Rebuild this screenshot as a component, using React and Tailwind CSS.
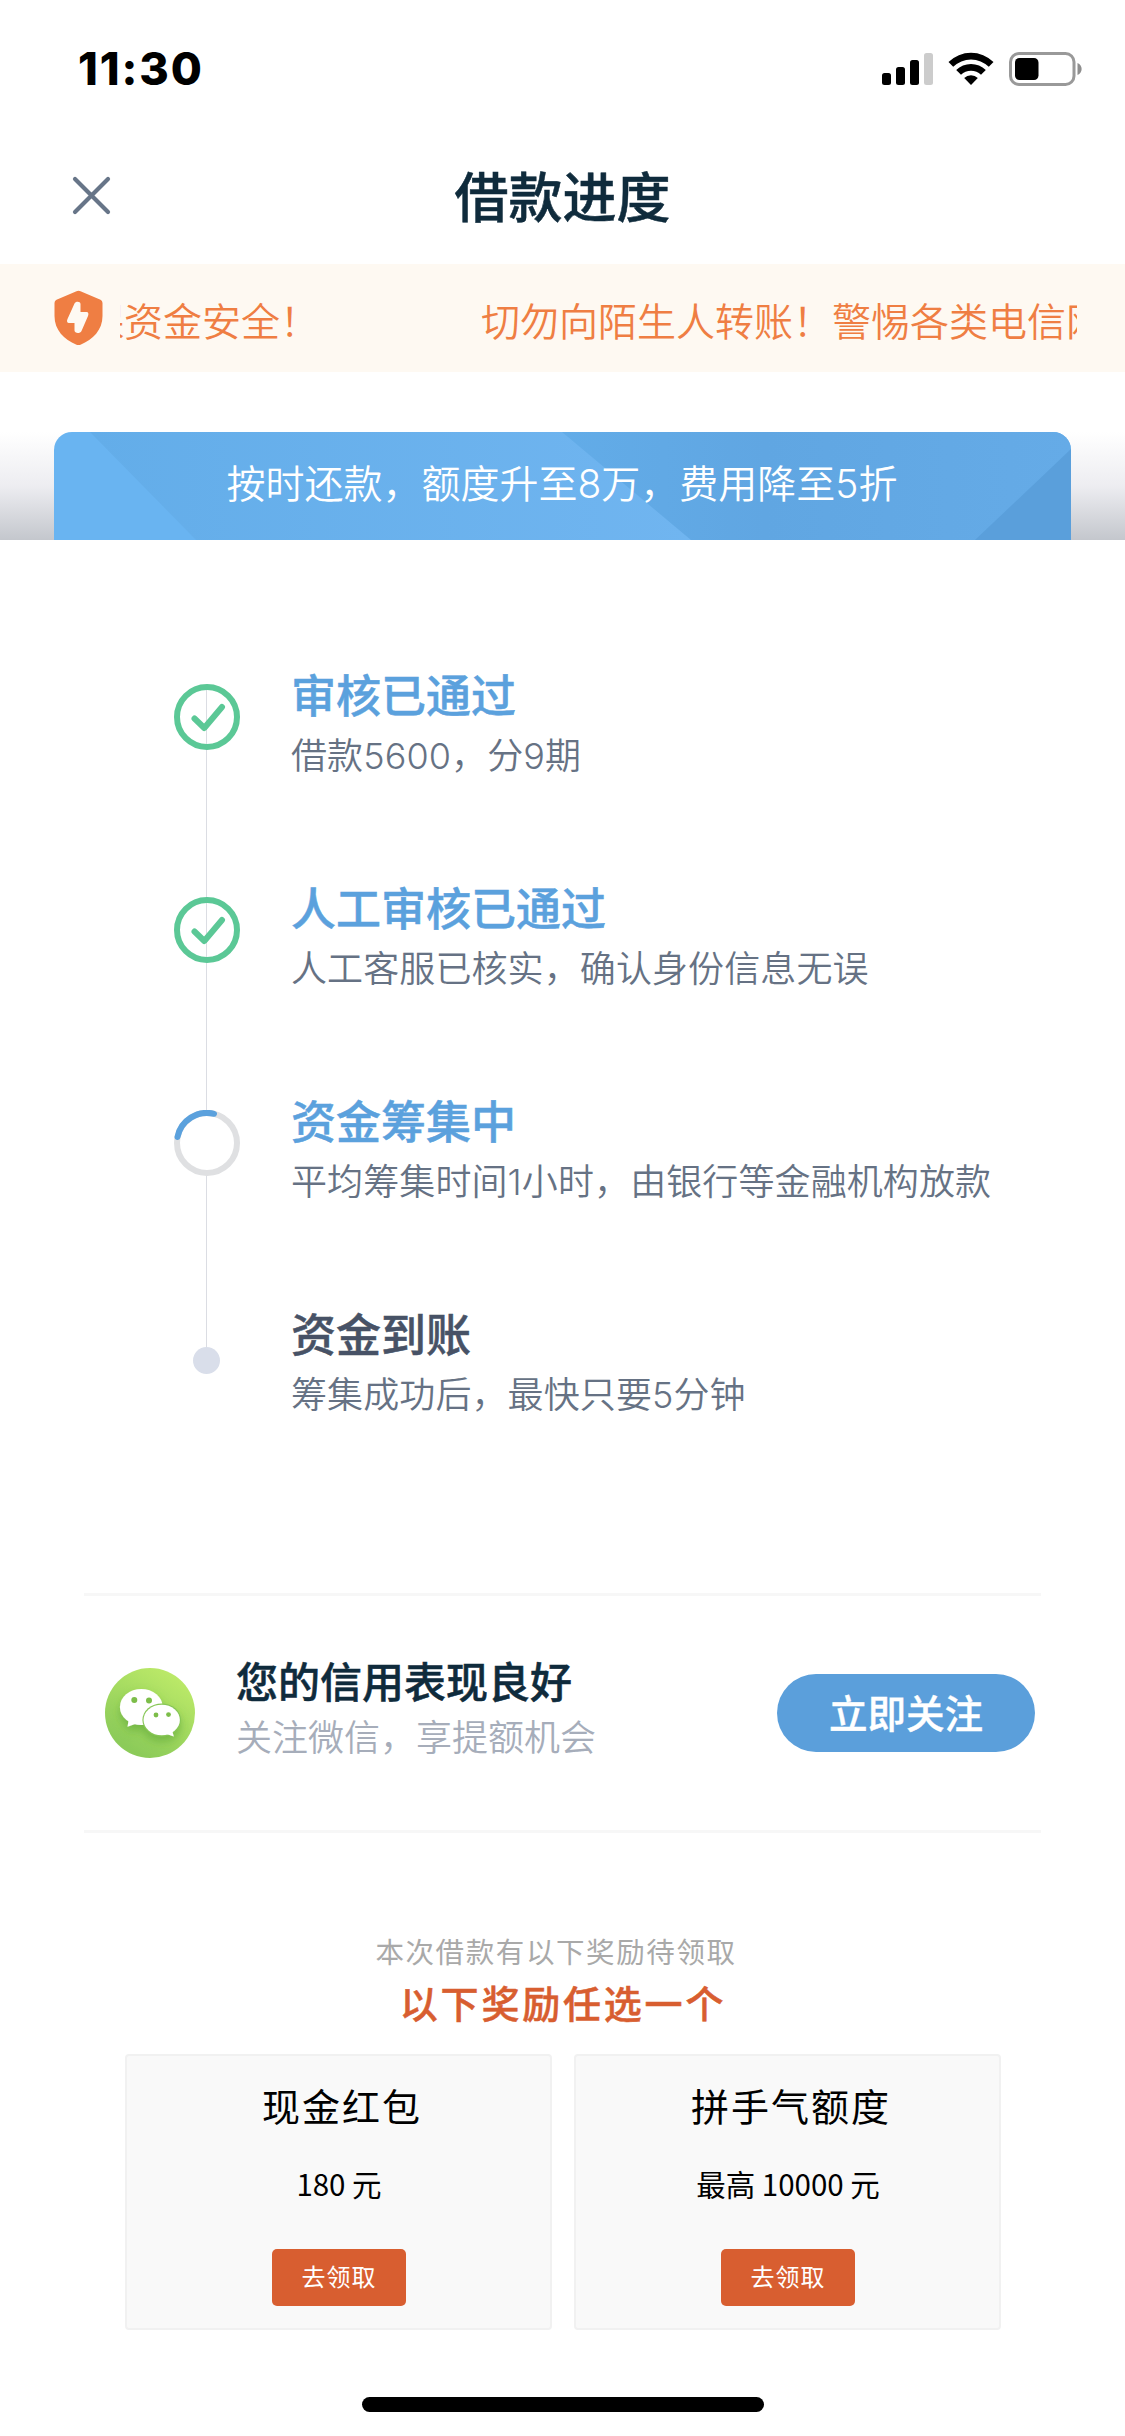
import React from 'react';

const steps = [
  { title: '审核已通过', desc: '借款5600，分9期', status: 'done' },
  { title: '人工审核已通过', desc: '人工客服已核实，确认身份信息无误', status: 'done' },
  { title: '资金筹集中', desc: '平均筹集时间1小时，由银行等金融机构放款', status: 'loading' },
  { title: '资金到账', desc: '筹集成功后，最快只要5分钟', status: 'pending' },
];

const rewards = [
  { title: '现金红包', amount: '180 元' },
  { title: '拼手气额度', amount: '最高 10000 元' },
];

const StatusBar = () => (
  <div className="flex h-[132px] items-start justify-between pl-[78px] pr-[42px]">
    <div className="mt-[46px] text-[45px] leading-[46px] font-extrabold tracking-[1.9px] text-black">11:30</div>
    <div className="mt-[52px] flex items-start">
      <svg width="52" height="34" viewBox="0 0 52 34">
        <rect x="0" y="21" width="9" height="12" rx="2.5" />
        <rect x="14" y="15" width="9" height="18" rx="2.5" />
        <rect x="28" y="8" width="9" height="25" rx="2.5" />
        <rect x="42" y="1" width="9" height="32" rx="2.5" fill="#cccccc" />
      </svg>
      <svg className="ml-[14px]" width="46" height="34" viewBox="0 0 46 34">
        <path d="M0.5 10A32 32 0 0 1 45.5 10L40.8 14.8A25.3 25.3 0 0 0 5.2 14.8Z" />
        <path d="M8.2 18A21 21 0 0 1 37.8 18L33 22.8A14.2 14.2 0 0 0 13 22.8Z" />
        <path d="M16.2 26A9.8 9.8 0 0 1 29.8 26L23 33Z" />
      </svg>
      <svg className="ml-[15px]" width="74" height="34" viewBox="0 0 74 34">
        <rect x="1.5" y="1.5" width="63.5" height="31" rx="8.5" fill="none" stroke="#999999" strokeWidth="3" />
        <rect x="6" y="6" width="23.5" height="22" rx="4.5" />
        <path d="M68.5 11C74 13 74 21 68.5 23Z" fill="#8e8e8e" />
      </svg>
    </div>
  </div>
);

const Header = () => (
  <header className="grid h-[132px] grid-cols-[183px_1fr_183px] items-center">
    <svg className="mb-[4px] ml-[72px]" width="40" height="40" viewBox="0 0 40 40">
      <path d="M3 3L36 36M36 3L3 36" stroke="#677588" strokeWidth="4.2" strokeLinecap="round" />
    </svg>
    <h1 className="pt-[2px] text-center text-[54px] leading-[64px] font-medium text-[#0f2b3c] [-webkit-text-stroke:0.5px]">借款进度</h1>
  </header>
);

const Notice = () => (
  <div className="flex h-[108px] items-center bg-[#fef9f2] px-[48px] text-[39px] font-[350] text-[#ef7e43]">
    <svg className="ml-[6px] shrink-0" width="49" height="56" viewBox="0 0 49 56">
      <path d="M22.5 1.2Q24.5 0.2 26.5 1.2L46.5 9.8Q48.5 10.8 48.5 13V26C48.5 40 39 49.5 26.5 54.7Q24.5 55.5 22.5 54.7C10 49.5 0.5 40 0.5 26V13Q0.5 10.8 2.5 9.8Z" fill="#ef7e43" />
      <path d="M20.5 13.5C21.5 11 26.5 11 26.5 14V22H32.5C34.5 22 34.8 24 34 26L27.5 41C26 44 20.5 43.5 20.5 40.5V33H15C13 33 12.5 31 13.5 29Z" fill="#fef9f2" />
    </svg>
    <div className="ml-[17px] flex h-[70px] w-[957px] justify-end overflow-hidden leading-[78px] whitespace-nowrap">
      <span className="mr-[162px] shrink-0">确保资金安全！</span>
      <span className="-mr-[28px] shrink-0">切勿向陌生人转账！警惕各类电信网</span>
    </div>
  </div>
);

const Banner = () => (
  <div className="mt-[60px] h-[108px] bg-linear-to-b from-white via-[#ededf1] to-[#c4c7cd] px-[54px]">
    <div className="relative flex h-full items-center justify-center overflow-hidden rounded-t-[18px]">
      <svg className="absolute inset-0" width="1017" height="108" viewBox="0 0 1017 108">
        <defs>
          <linearGradient id="mid" x1="0" x2="1">
            <stop offset="0" stopColor="#63ade9" />
            <stop offset="1" stopColor="#70b5f0" />
          </linearGradient>
          <linearGradient id="right" x1="0" x2="1">
            <stop offset="0" stopColor="#62ace8" />
            <stop offset="0.4" stopColor="#60a6e2" />
            <stop offset="1" stopColor="#65abe7" />
          </linearGradient>
        </defs>
        <rect width="1017" height="108" fill="#69b4f1" />
        <path d="M36 0H637V108H142Z" fill="url(#mid)" />
        <path d="M508 0H1017V108H637Z" fill="url(#right)" />
        <path d="M1017 17V108H921Z" fill="#5a9fdb" />
      </svg>
      <p className="relative mt-[-4px] mr-[1px] text-[39px] leading-[50px] font-[350] text-white">按时还款，额度升至8万，费用降至5折</p>
    </div>
  </div>
);

const StepIcon = ({ status }) => {
  if (status === 'done') {
    return (
      <svg className="relative" width="66" height="66" viewBox="0 0 66 66" fill="none" stroke="#5bc896" strokeWidth="6">
        <circle cx="33" cy="33" r="30" />
        <path d="M20.5 34.5L30.3 44L48 23" strokeLinecap="round" strokeLinejoin="round" />
      </svg>
    );
  }
  if (status === 'loading') {
    return (
      <svg className="relative" width="66" height="66" viewBox="0 0 66 66" fill="none" strokeWidth="6">
        <circle cx="33" cy="33" r="30" fill="white" stroke="#dfe0e2" />
        <path d="M3.5 27A30 30 0 0 1 40 3.8" stroke="#5ba1dd" strokeLinecap="round" />
      </svg>
    );
  }
  return <div className="relative mt-[24px] mr-[1px] h-[27px] w-[27px] rounded-full bg-[#d9deea]" />;
};

const Steps = () => (
  <section className="mt-[120px] flex flex-col pl-[174px]">
    {steps.map((step, idx) => (
      <div key={step.title} className="flex h-[213px] items-start">
        <div className="relative mt-[24px] flex w-[66px] justify-center">
          {idx < steps.length - 1 && <div className="absolute top-[5px] left-[32px] h-[234px] w-px bg-[#dbdde3]" />}
          <StepIcon status={step.status} />
        </div>
        <div className="mt-[4px] ml-[51px]">
          <h2
            className={
              step.status === 'pending'
                ? 'text-[45px] leading-[65px] font-medium text-[#475266] [-webkit-text-stroke:0.5px]'
                : 'text-[45px] leading-[65px] font-medium text-[#5ba1dd] [-webkit-text-stroke:0.5px]'
            }
          >
            {step.title}
          </h2>
          <p className="text-[36px] leading-[54px] font-[350] tracking-[0.1px] text-[#667284]">{step.desc}</p>
        </div>
      </div>
    ))}
  </section>
);

const WechatIcon = () => (
  <svg className="shrink-0" width="90" height="90" viewBox="0 0 90 90">
    <defs>
      <linearGradient id="wx" x1="0.8" y1="0.1" x2="0.3" y2="0.9">
        <stop offset="0" stopColor="#bbe968" />
        <stop offset="1" stopColor="#8ccb59" />
      </linearGradient>
      <filter id="wxShadow" x="-30%" y="-30%" width="160%" height="170%">
        <feDropShadow dx="0" dy="5" stdDeviation="5" floodColor="#4c9a2a" floodOpacity="0.5" />
      </filter>
    </defs>
    <circle cx="45" cy="45" r="45" fill="url(#wx)" />
    <g filter="url(#wxShadow)">
      <ellipse cx="36.3" cy="39" rx="21.4" ry="18" fill="white" />
      <path d="M24 50L22.5 58.8L33 55Z" fill="white" />
      <ellipse cx="56.7" cy="52" rx="19.3" ry="16.5" fill="#86c655" />
      <ellipse cx="56.7" cy="52" rx="18.2" ry="15.3" fill="white" />
      <path d="M67 62L68.8 68.5L60 65.5Z" fill="white" />
    </g>
    <g fill="#7cbd49">
      <circle cx="29.3" cy="32" r="3" />
      <circle cx="44" cy="32.5" r="3" />
      <circle cx="51" cy="47" r="2.4" />
      <circle cx="63.5" cy="46.6" r="2.4" />
    </g>
  </svg>
);

const Follow = () => (
  <section className="mx-[84px] mt-[81px] flex h-[240px] items-center border-y-[3px] border-[#f7f7f7] pr-[6px] pl-[21px]">
    <WechatIcon />
    <div className="mb-[10px] ml-[41px] flex-1">
      <h3 className="text-[42px] leading-[60px] font-medium text-[#0f2b3c] [-webkit-text-stroke:0.5px]">您的信用表现良好</h3>
      <p className="text-[36px] leading-[50px] font-[350] text-[#a6adba]">关注微信，享提额机会</p>
    </div>
    <button className="h-[78px] w-[258px] rounded-full bg-[#5b9fdb] pt-[3px] text-[38.5px] font-medium text-white [-webkit-text-stroke:0.4px]">
      立即关注
    </button>
  </section>
);

const Rewards = () => (
  <section className="flex flex-col items-center pt-[100px] pl-px">
    <p className="mr-[14px] text-[28.5px] leading-[40px] tracking-[1.6px] text-[#a9a9a9]">本次借款有以下奖励待领取</p>
    <h3 className="mt-[6px] text-[38px] leading-[50px] font-medium tracking-[2.8px] text-[#d85e30] [-webkit-text-stroke:0.5px]">以下奖励任选一个</h3>
    <div className="mt-[25px] grid w-[876px] grid-cols-2 gap-[22px]">
      {rewards.map((reward) => (
        <div key={reward.title} className="flex h-[276px] flex-col items-center rounded-[4px] border-2 border-[#f1f1f1] bg-[#f9f9f9]">
          <h4 className="mt-[25px] ml-[7px] text-[38px] leading-[52px] tracking-[2px] text-black">{reward.title}</h4>
          <p className="mt-[30px] ml-[1px] font-['Noto_Sans_CJK_SC',sans-serif] text-[29.5px] leading-[40px] text-black">{reward.amount}</p>
          <button className="mt-[46px] ml-[1px] h-[57px] w-[134px] rounded-[5px] bg-[#d85e30] text-[24px] tracking-[1px] text-white">去领取</button>
        </div>
      ))}
    </div>
  </section>
);

const App = () => {
  return (
    <div className="flex h-[2436px] w-[1125px] flex-col overflow-hidden bg-white font-['Inter','Noto_Sans_CJK_SC',sans-serif]">
      <StatusBar />
      <Header />
      <Notice />
      <Banner />
      <Steps />
      <Follow />
      <Rewards />
      <div className="mt-auto mb-[24px] ml-[362px] h-[15px] w-[402px] rounded-full bg-black" />
    </div>
  );
};

export default App;
